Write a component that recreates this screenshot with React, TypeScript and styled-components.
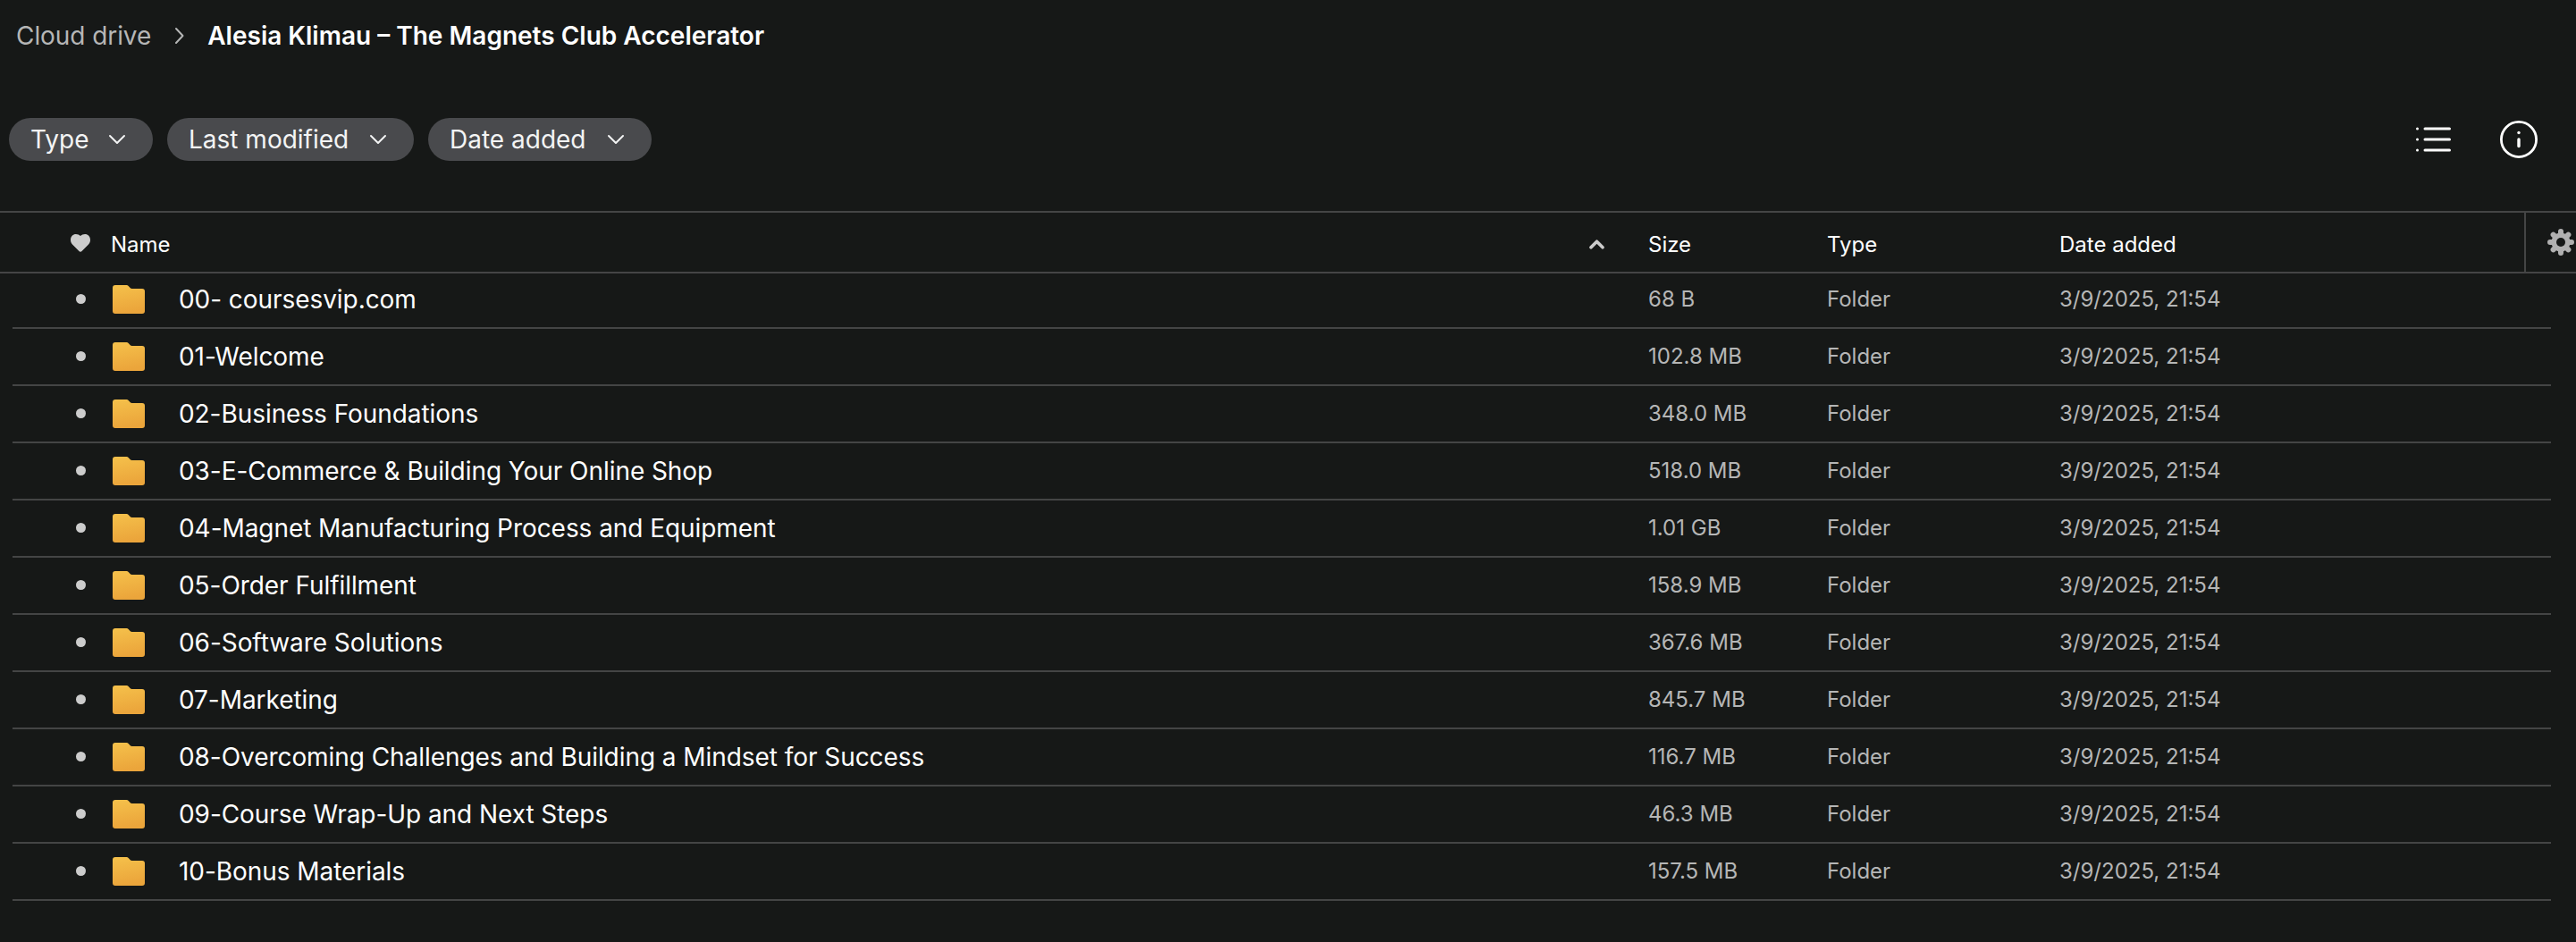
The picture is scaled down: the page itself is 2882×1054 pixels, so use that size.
import React from "react";
import styled, { createGlobalStyle } from "styled-components";

const Colors = {
    background: "#161817",
    line: "#444545",
    pill: "#494a4d",
    white: "#ffffff",
    pill_text: "#f3f4f4",
    muted: "#b5b6b6",
    icon_grey: "#cccccc",
};

const COLUMNS = "110px 1720px 200px 260px 1fr";

const GlobalStyle = createGlobalStyle`
    body {
        margin: 0;
        background: ${Colors.background};
        font-family: Inter, "Liberation Sans", sans-serif;
        color: ${Colors.white};
    }
`;

// STYLED COMPONENTS

const Page = styled.div`
    width: 100%;
    height: 1054px;
    overflow: hidden;
    background: ${Colors.background};
`;

const Breadcrumbs = styled.nav`
    display: flex;
    align-items: center;
    height: 80px;
    padding-left: 18px;
    font-size: 28px;
    white-space: nowrap;
`;

const Crumb = styled.span`
    color: ${Colors.muted};
    letter-spacing: -0.07px;
`;

const CurrentCrumb = styled.span`
    font-weight: 600;
`;

const CrumbArrow = styled.svg`
    width: 14px;
    height: 20px;
    margin: 0 24px 0 25px;
`;

const Toolbar = styled.div`
    display: flex;
    justify-content: space-between;
    align-items: center;
    height: 48px;
    margin-top: 52px;
    padding: 0 43px 0 10px;
`;

const Filters = styled.div`
    display: flex;
    gap: 16px;
`;

const FilterPill = styled.button<{ $width: number }>`
    display: flex;
    align-items: center;
    justify-content: space-between;
    box-sizing: border-box;
    width: ${({ $width }) => $width}px;
    height: 48px;
    padding: 0 30px 0 24px;
    border: none;
    border-radius: 24px;
    background: ${Colors.pill};
    color: ${Colors.pill_text};
    font-family: inherit;
    font-size: 28px;
    white-space: nowrap;
`;

const PillArrow = styled.svg`
    width: 20px;
    height: 12px;
`;

const ViewActions = styled.div`
    display: flex;
    align-items: center;
    gap: 55px;
`;

const Table = styled.div`
    margin-top: 56px;
`;

const HeaderRow = styled.div`
    display: flex;
    box-sizing: border-box;
    height: 70px;
    border-top: 2px solid ${Colors.line};
    border-bottom: 2px solid ${Colors.line};
`;

const HeaderCells = styled.div`
    display: grid;
    grid-template-columns: ${COLUMNS};
    flex: 1;
    align-items: center;
    padding: 5px 0 0 14px;
    font-size: 24px;
`;

const HeaderMark = styled.div`
    display: flex;
    justify-content: center;
    padding: 0 0 4px 42px;
`;

const NameHeader = styled.div`
    display: flex;
    align-items: center;
    justify-content: space-between;
    padding: 0 49px 0 0;
`;

const Settings = styled.div`
    display: flex;
    align-items: center;
    justify-content: flex-end;
    box-sizing: border-box;
    width: 58px;
    padding: 0 2px 0 0;
    border-left: 2px solid ${Colors.line};
`;

const Rows = styled.div`
    margin: -2px 28px 0 14px;
`;

const Row = styled.div`
    display: grid;
    grid-template-columns: ${COLUMNS};
    align-items: center;
    box-sizing: border-box;
    height: 64px;
    border-bottom: 2px solid ${Colors.line};
    color: ${Colors.muted};
    font-size: 24px;
    white-space: nowrap;
`;

const MetaCell = styled.span`
    padding-bottom: 1px;
`;

const Mark = styled.div`
    display: flex;
    justify-content: center;
    padding: 0 0 1px 42px;
`;

const Dot = styled.span`
    width: 11px;
    height: 11px;
    border-radius: 50%;
    background: ${Colors.icon_grey};
`;

const NameCell = styled.div`
    display: flex;
    align-items: center;
    gap: 38px;
    padding-left: 2px;
    color: ${Colors.white};
    font-size: 28px;
    letter-spacing: -0.06px;
`;

// DATA

const filters = [
    { label: "Type", width: 161 },
    { label: "Last modified", width: 276 },
    { label: "Date added", width: 250 },
];

const folders = [
    { name: "00- coursesvip.com", size: "68 B" },
    { name: "01-Welcome", size: "102.8 MB" },
    { name: "02-Business Foundations", size: "348.0 MB" },
    { name: "03-E-Commerce & Building Your Online Shop", size: "518.0 MB" },
    { name: "04-Magnet Manufacturing Process and Equipment", size: "1.01 GB" },
    { name: "05-Order Fulfillment", size: "158.9 MB" },
    { name: "06-Software Solutions", size: "367.6 MB" },
    { name: "07-Marketing", size: "845.7 MB" },
    { name: "08-Overcoming Challenges and Building a Mindset for Success", size: "116.7 MB" },
    { name: "09-Course Wrap-Up and Next Steps", size: "46.3 MB" },
    { name: "10-Bonus Materials", size: "157.5 MB" },
];

const ADDED = "3/9/2025, 21:54";

// ICONS

const FolderIcon = () => (
    <svg width="36" height="32" viewBox="0 0 36 32">
        <defs>
            <linearGradient id="folderFill" x1="0" y1="0" x2="0.2" y2="1">
                <stop offset="0" stopColor="#f5c14b" />
                <stop offset="1" stopColor="#eba53b" />
            </linearGradient>
        </defs>
        <path
            d="M3 0h12.6c.9 0 1.5.3 2.1.9l2.1 2.3c.5.5 1 .8 1.8.8H33a3 3 0 0 1 3 3v22a3 3 0 0 1-3 3H3a3 3 0 0 1-3-3V3a3 3 0 0 1 3-3z"
            fill="url(#folderFill)"
        />
    </svg>
);

const HeartIcon = () => (
    <svg width="22" height="20" viewBox="0 0 22 20">
        <path
            d="M11 19.8c-.7 0-1.2-.5-1.8-1.1l-7-7C.7 10.2 0 8.3 0 6.4 0 2.6 2.6 0 6 0c2 0 3.8.7 5 2.1C12.2.7 14 0 16 0c3.4 0 6 2.6 6 6.4 0 1.9-.7 3.8-2.2 5.3l-7 7c-.6.6-1.1 1.1-1.8 1.1z"
            fill={Colors.icon_grey}
        />
    </svg>
);

const SortIcon = () => (
    <svg width="17" height="11" viewBox="0 0 17 11">
        <path d="M2 8.8l6.5-6.6L15 8.8" fill="none" stroke={Colors.icon_grey} strokeWidth="3.6" strokeLinecap="round" strokeLinejoin="round" />
    </svg>
);

const ListIcon = () => (
    <svg width="39" height="28" viewBox="0 0 39 28">
        {[2, 14, 26].map((y) => (
            <g key={y} stroke={Colors.white} strokeWidth="3" strokeLinecap="round">
                <path d={`M1.5 ${y}h.01`} />
                <path d={`M10 ${y}h27.5`} />
            </g>
        ))}
    </svg>
);

const InfoIcon = () => (
    <svg width="42" height="42" viewBox="0 0 42 42">
        <circle cx="21" cy="21" r="19.6" fill="none" stroke={Colors.white} strokeWidth="2.8" />
        <circle cx="21" cy="13.5" r="1.7" fill={Colors.white} />
        <path d="M21 21v7.5" stroke={Colors.white} strokeWidth="3.4" strokeLinecap="round" />
    </svg>
);

const GearIcon = () => (
    <svg width="30" height="30" viewBox="0 0 30 30">
        <g stroke="#b0b0b0" strokeWidth="6" strokeLinecap="round">
            <path d="M15 3v24M3 15h24" />
            <path d="M6.6 6.6l16.8 16.8M23.4 6.6L6.6 23.4" />
        </g>
        <circle cx="15" cy="15" r="10.5" fill="#b0b0b0" />
        <circle cx="15" cy="15" r="5" fill={Colors.background} />
    </svg>
);

/**
 * Cloud drive folder view: breadcrumbs, filters and the list of folders.
 */
const App = () => {
    return (
        <Page>
            <GlobalStyle />
            <Breadcrumbs>
                <Crumb>Cloud drive</Crumb>
                <CrumbArrow viewBox="0 0 14 20">
                    <path d="M3 2l7.5 8L3 18" fill="none" stroke={Colors.muted} strokeWidth="2" strokeLinecap="round" strokeLinejoin="round" />
                </CrumbArrow>
                <CurrentCrumb>Alesia Klimau – The Magnets Club Accelerator</CurrentCrumb>
            </Breadcrumbs>
            <Toolbar>
                <Filters>
                    {filters.map(({ label, width }) => (
                        <FilterPill key={label} $width={width}>
                            {label}
                            <PillArrow viewBox="0 0 20 12">
                                <path d="M2 2l8 8 8-8" fill="none" stroke={Colors.pill_text} strokeWidth="2" strokeLinecap="round" strokeLinejoin="round" />
                            </PillArrow>
                        </FilterPill>
                    ))}
                </Filters>
                <ViewActions>
                    <ListIcon />
                    <InfoIcon />
                </ViewActions>
            </Toolbar>
            <Table>
                <HeaderRow>
                    <HeaderCells>
                        <HeaderMark>
                            <HeartIcon />
                        </HeaderMark>
                        <NameHeader>
                            Name
                            <SortIcon />
                        </NameHeader>
                        <span>Size</span>
                        <span>Type</span>
                        <span>Date added</span>
                    </HeaderCells>
                    <Settings>
                        <GearIcon />
                    </Settings>
                </HeaderRow>
                <Rows>
                    {folders.map(({ name, size }) => (
                        <Row key={name}>
                            <Mark>
                                <Dot />
                            </Mark>
                            <NameCell>
                                <FolderIcon />
                                {name}
                            </NameCell>
                            <MetaCell>{size}</MetaCell>
                            <MetaCell>Folder</MetaCell>
                            <MetaCell>{ADDED}</MetaCell>
                        </Row>
                    ))}
                </Rows>
            </Table>
        </Page>
    );
};

export default App;
